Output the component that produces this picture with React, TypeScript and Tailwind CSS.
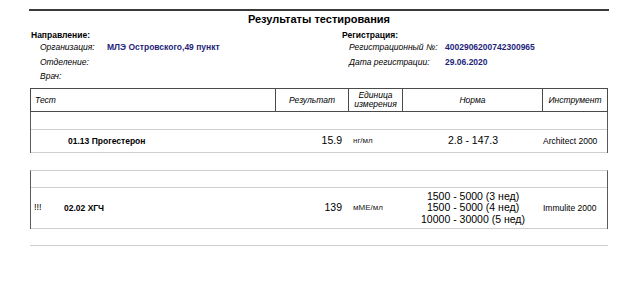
const cols = ['w-[245px]', 'w-[73px]', 'w-[54px]', 'w-[140px]']

type Row = {
  flag?: string
  name: string
  namePad: string
  value: string
  unit: string
  norm: string[]
  device: string
  height: string
}

const rows: Row[] = [
  {
    name: '01.13 Прогестерон',
    namePad: 'pl-[37px]',
    value: '15.9',
    unit: 'нг/мл',
    norm: ['2.8 - 147.3'],
    device: 'Architect 2000',
    height: 'h-[23px]',
  },
  {
    flag: '!!!',
    name: '02.02 ХГЧ',
    namePad: 'pl-[3px]',
    value: '139',
    unit: 'мМЕ/мл',
    norm: ['1500 - 5000 (3 нед)', '1500 - 5000 (4 нед)', '10000 - 30000 (5 нед)'],
    device: 'Immulite 2000',
    height: 'h-[41px]',
  },
]

function Info() {
  return (
    <div className="grid grid-cols-[313px_1fr] text-[8.5px] leading-[12px]">
      <div className="mt-[3px] pl-[2px] font-bold">Направление:</div>
      <div className="mt-[3px] font-bold">Регистрация:</div>

      <div className="flex pl-[11px]">
        <span className="w-[67px] italic">Организация:</span>
        <span className="font-bold text-[#1f1f7a]">МЛЭ Островского,49 пункт</span>
      </div>
      <div className="flex pl-[7px]">
        <span className="w-[96px] italic">Регистрационный №:</span>
        <span className="font-bold text-[#1f1f7a]">4002906200742300965</span>
      </div>

      <div className="mt-[3px] pl-[11px] italic">Отделение:</div>
      <div className="mt-[3px] flex pl-[7px]">
        <span className="w-[96px] italic">Дата регистрации:</span>
        <span className="font-bold text-[#1f1f7a]">29.06.2020</span>
      </div>

      <div className="mt-[2px] pl-[11px] italic">Врач:</div>
      <div className="mt-[2px]" />
    </div>
  )
}

function Header() {
  return (
    <div className="flex h-[24px] border border-[#4a4a4a] text-[8.5px] italic leading-[10px]">
      <div className={`${cols[0]} flex items-center border-r border-[#4a4a4a] pl-[4px]`}>Тест</div>
      <div className={`${cols[1]} flex items-center justify-center border-r border-[#4a4a4a]`}>Результат</div>
      <div className={`${cols[2]} flex flex-col items-center justify-center border-r border-[#4a4a4a] leading-[9px]`}>
        <span>Единица</span>
        <span>измерения</span>
      </div>
      <div className={`${cols[3]} flex items-center justify-center border-r border-[#4a4a4a]`}>Норма</div>
      <div className="flex flex-1 items-center justify-center">Инструмент</div>
    </div>
  )
}

function Group({ row, first }: { row: Row; first?: boolean }) {
  return (
    <div className={`border-x border-[#5a5a5a] ${first ? '' : 'mt-[17px] border-t border-t-[#cfcfcf]'}`}>
      <div className={`${first ? 'h-[18px]' : 'h-[17px]'} border-b border-[#cfcfcf]`} />
      <div className={`flex items-center ${row.height} border-b border-[#cfcfcf]`}>
        <div className={`${cols[0]} flex items-center text-[8.5px] font-bold ${row.namePad}`}>
          {row.flag && <span className="w-[30px] font-normal text-[9px]">{row.flag}</span>}
          <span>{row.name}</span>
        </div>
        <div className={`${cols[1]} pr-[7px] text-right text-[10.5px]`}>{row.value}</div>
        <div className={`${cols[2]} pl-[4px] text-[8px] text-[#222]`}>{row.unit}</div>
        <div className={`${cols[3]} flex flex-col items-center text-[10.5px] leading-[11.5px]`}>
          {row.norm.map((n) => (
            <span key={n}>{n}</span>
          ))}
        </div>
        <div className="flex-1 whitespace-nowrap text-left text-[8.5px]">{row.device}</div>
      </div>
    </div>
  )
}

export default function App() {
  return (
    <div className="h-[293px] w-[640px] overflow-hidden bg-white text-black font-['Liberation_Sans',Arial,sans-serif]">
      <div className="ml-[29px] w-[580px] pt-[9px]">
        <div className="border-t-2 border-[#3a3a3a]" />
        <h1 className="mt-[1px] text-center text-[11px] font-bold leading-[14px]">Результаты тестирования</h1>
        <Info />
        <div className="ml-[1px] mt-[6px] w-[578px]">
          <Header />
          <Group row={rows[0]} first />
          <Group row={rows[1]} />
          <div className="mt-[16px] border-t border-[#cfcfcf]" />
        </div>
      </div>
    </div>
  )
}
